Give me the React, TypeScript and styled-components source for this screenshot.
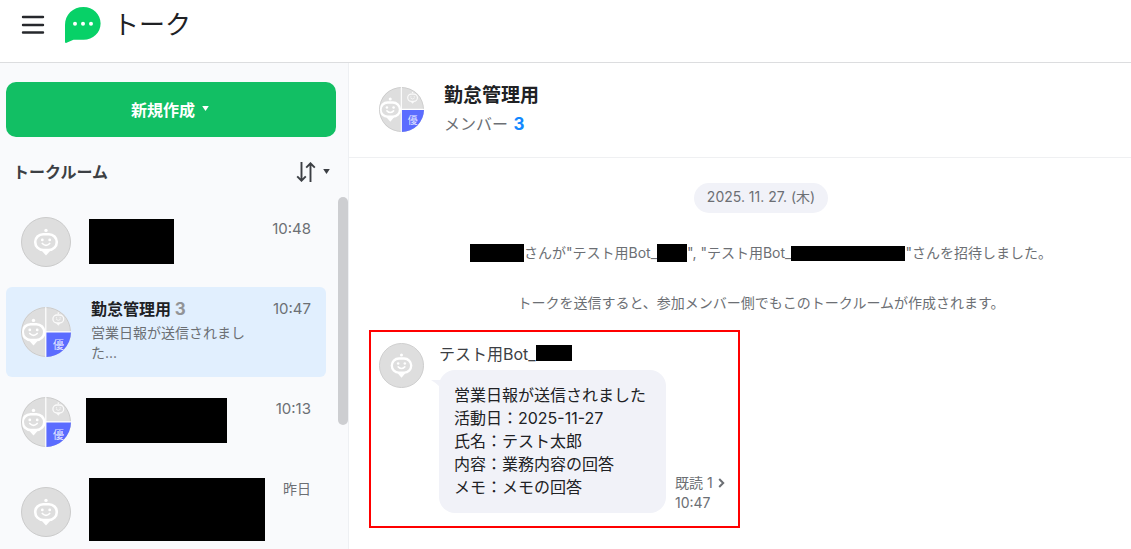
import React, { useId } from "react";
import styled, { createGlobalStyle } from "styled-components";

const GlobalStyle = createGlobalStyle`
  *, *::before, *::after { box-sizing: border-box; }
  body {
    margin: 0;
    background: #fff;
    color: #202124;
    font-family: Inter, "Noto Sans CJK JP", sans-serif;
    font-size: 16px;
  }
  h1, h2, h3, p, ul, time { margin: 0; padding: 0; }
  button { font: inherit; color: inherit; border: 0; background: none; padding: 0; cursor: pointer; }
  svg { display: block; flex: none; }
`;

const Page = styled.div`
  display: flex;
  flex-direction: column;
  height: 100vh;
  overflow: hidden;
`;

const TopBar = styled.header`
  display: flex;
  align-items: center;
  flex: none;
  height: 63px;
  padding: 0 21px 12px;
  border-bottom: 1px solid #dcdddf;
`;

const MenuButton = styled.button`
  margin-right: 20px;
`;

const AppTitle = styled.h1`
  margin-left: 12px;
  font-size: 26px;
  font-weight: 400;
  line-height: 36px;
`;

const Body = styled.div`
  display: flex;
  flex: 1;
  min-height: 0;
`;

const Sidebar = styled.aside`
  display: flex;
  flex-direction: column;
  flex: none;
  width: 349px;
  padding: 19px 0 0 6px;
  overflow: hidden;
  background: #f9fafc;
  border-right: 1px solid #eef0f3;
`;

const CreateButton = styled.button`
  display: flex;
  align-items: center;
  justify-content: center;
  gap: 7px;
  flex: none;
  height: 55px;
  margin-right: 12px;
  padding: 0 2px 2px 0;
  border-radius: 10px;
  background: #12bf64;
  color: #fff;
  font-weight: 700;
`;

const ListHeading = styled.div`
  display: flex;
  align-items: center;
  justify-content: space-between;
  flex: none;
  height: 60px;
  padding: 9px 18px 0 7px;
`;

const ListTitle = styled.h2`
  font-size: 16px;
  font-weight: 700;
  line-height: 24px;
  color: #3c3f44;
`;

const SortButton = styled.button`
  display: flex;
  align-items: center;
  gap: 7px;
  color: #3c3f44;
`;

const ListArea = styled.div`
  display: flex;
  justify-content: space-between;
`;

const RoomList = styled.ul`
  flex: 1;
  margin-right: 12px;
  list-style: none;
`;

const Room = styled.li<{ $active?: boolean }>`
  display: flex;
  align-items: flex-start;
  height: 90px;
  padding: 0 15px;
  border-radius: 6px;
  background: ${(p) => (p.$active ? "#e1effe" : "transparent")};
`;

const RoomAvatar = styled.div`
  padding-top: 20px;
  margin-right: 20px;
`;

const RoomText = styled.div`
  flex: 1;
  padding-top: 10px;
`;

const RoomName = styled.h3`
  font-size: 16px;
  font-weight: 700;
  line-height: 24px;
`;

const RoomCount = styled.span`
  font-size: 17px;
  color: #929497;
`;

const RoomPreview = styled.p`
  width: 156px;
  padding-top: 2px;
  font-size: 14px;
  line-height: 20px;
  color: #6c6f74;
`;

const RoomTime = styled.time<{ $twoLine?: boolean; $day?: boolean }>`
  padding-top: ${(p) => (p.$twoLine ? 12 : 22)}px;
  font-size: ${(p) => (p.$day ? 14 : 15)}px;
  line-height: 20px;
  color: #6c6f74;
`;

const RoomMask = styled.div<{ $width: number; $height: number; $top: number; $shift: number }>`
  width: ${(p) => p.$width}px;
  height: ${(p) => p.$height}px;
  margin: ${(p) => p.$top}px auto 0 -${(p) => p.$shift}px;
  background: #000;
`;

const Thumb = styled.div`
  width: 10px;
  height: 228px;
  border-radius: 5px;
  background: #cdced1;
`;

const Main = styled.main`
  flex: 1;
  min-width: 0;
`;

const RoomHeader = styled.header`
  display: flex;
  align-items: center;
  gap: 20px;
  height: 95px;
  padding: 0 30px 1px;
  border-bottom: 1px solid #eff0f2;
`;

const HeaderName = styled.h2`
  padding-top: 1px;
  font-size: 19px;
  font-weight: 700;
  line-height: 28px;
`;

const Members = styled.p`
  line-height: 28px;
  color: #6c6f74;
`;

const MemberCount = styled.strong`
  margin-left: 1px;
  font-size: 17px;
  color: #1288ff;
`;

const Notices = styled.div`
  display: flex;
  flex-direction: column;
  align-items: center;
  padding: 25px 0 0 42px;
  font-size: 14px;
  line-height: 20px;
  color: #6c6f74;
`;

const DatePill = styled.time`
  padding: 4px 13px 6px;
  border-radius: 15px;
  background: #f1f2f8;
`;

const Notice = styled.p`
  display: flex;
  align-items: center;
  margin-top: 30px;
  white-space: pre;
`;

const TextMask = styled.span<{ $width: number; $height: number }>`
  width: ${(p) => p.$width}px;
  height: ${(p) => p.$height}px;
  background: #000;
`;

const Highlight = styled.section`
  display: flex;
  width: fit-content;
  margin: 17px 0 0 20px;
  padding: 11px 13px 13px 8px;
  border: 2px solid #f00;
`;

const MessageColumn = styled.div`
  margin-left: 15px;
`;

const Sender = styled.h3`
  display: flex;
  align-items: center;
  height: 20px;
  margin-bottom: 7px;
  font-size: 16px;
  font-weight: 400;
  color: #3c3f44;
`;

const Bubble = styled.div`
  position: relative;
  padding: 14px 20px 14px 15px;
  border-radius: 16px;
  background: #f1f2f8;
  line-height: 23px;
`;

const Tail = styled.svg`
  position: absolute;
  top: 10px;
  left: -8px;
`;

const Meta = styled.div`
  align-self: flex-end;
  margin-left: 9px;
  font-size: 14px;
  line-height: 20px;
  color: #6c6f74;
`;

const ReadButton = styled.button`
  display: flex;
  align-items: center;
  gap: 5px;
`;

const MessageTime = styled.time`
  display: block;
`;

const Caret = () => (
  <svg width="7" height="5" viewBox="0 0 7 5" aria-hidden="true">
    <path d="M.2 0h6.600L3.500 5z" fill="currentColor" />
  </svg>
);

const BotFace = () => (
  <g>
    <circle cx="25" cy="13.400" r="1.700" fill="#fff" />
    <rect x="14.200" y="17.200" width="21.600" height="15.800" rx="7.900" fill="none" stroke="#fff" strokeWidth="2.600" />
    <path d="M20.500 33.400h9L25 38.500z" fill="#fff" />
    <circle cx="21.300" cy="22.900" r="1.400" fill="#fff" />
    <circle cx="28.700" cy="22.900" r="1.400" fill="#fff" />
    <path d="M21.300 26.500q3.700 3.600 7.400 0" fill="none" stroke="#fff" strokeWidth="1.700" strokeLinecap="round" />
  </g>
);

const BotAvatar = ({ size }: { size: number }) => (
  <svg width={size} height={size} viewBox="0 0 50 50" aria-hidden="true">
    <circle cx="25" cy="25" r="24.500" fill="#dedede" stroke="#cbcbcb" />
    <BotFace />
  </svg>
);

const GroupAvatar = ({ size }: { size: number }) => {
  const clip = useId();
  return (
    <svg width={size} height={size} viewBox="0 0 50 50" aria-hidden="true">
      <clipPath id={clip}>
        <circle cx="25" cy="25" r="25" />
      </clipPath>
      <g clipPath={`url(#${clip})`}>
        <path d="M0 0h50v50H0z" fill="#dedede" />
        <g transform="translate(-12.500 0)">
          <BotFace />
        </g>
        <g transform="translate(24.800 -.6) scale(.5)" opacity=".85">
          <BotFace />
        </g>
        <circle cx="25" cy="25" r="24.500" fill="none" stroke="#cbcbcb" />
        <path d="M25 25h25v25H25z" fill="#5b6cff" />
        <path d="M24.800 0v50M25 24.900h25" stroke="#fff" strokeWidth="1.200" fill="none" />
        <text x="32" y="41.500" fontSize="11" fill="#fff" fillOpacity=".85">優</text>
      </g>
    </svg>
  );
};

type Mask = { width: number; height: number; top: number; shift: number };
type RoomData = { id: number; group: boolean; time: string; day?: boolean; twoLine?: boolean; mask?: Mask };

const rooms: RoomData[] = [
  { id: 1, group: false, time: "10:48", mask: { width: 85, height: 45, top: 12, shift: 2 } },
  { id: 2, group: true, time: "10:47", twoLine: true },
  { id: 3, group: true, time: "10:13", mask: { width: 141, height: 45, top: 11, shift: 5 } },
  { id: 4, group: false, time: "昨日", day: true, twoLine: true, mask: { width: 176, height: 63, top: 1, shift: 2 } },
];

const messageLines = [
  "営業日報が送信されました",
  "活動日：2025-11-27",
  "氏名：テスト太郎",
  "内容：業務内容の回答",
  "メモ：メモの回答",
];

export default function App() {
  return (
    <Page lang="ja">
      <GlobalStyle />
      <TopBar>
        <MenuButton aria-label="メニュー">
          <svg width="24" height="20" viewBox="0 0 24 20">
            <path d="M2 2h20M2 10h20M2 17.500h20" stroke="#26282c" strokeWidth="2.400" strokeLinecap="round" />
          </svg>
        </MenuButton>
        <svg width="36" height="36" viewBox="0 0 36 36" aria-hidden="true">
          <path
            d="M18.500 0C28 0 35.600 7.200 35.600 16.400S28 32.700 18.500 32.700H8.500L1 36Q0 36 0 34.800V18C0 7.500 8 0 18.500 0z"
            fill="#07d167"
          />
          <circle cx="10" cy="16.700" r="2" fill="#fff" />
          <circle cx="18" cy="16.700" r="2" fill="#fff" />
          <circle cx="26" cy="16.700" r="2" fill="#fff" />
        </svg>
        <AppTitle>トーク</AppTitle>
      </TopBar>
      <Body>
        <Sidebar>
          <CreateButton>
            新規作成
            <Caret />
          </CreateButton>
          <ListHeading>
            <ListTitle>トークルーム</ListTitle>
            <SortButton aria-label="並べ替え">
              <svg width="20" height="20" viewBox="0 0 20 20" fill="none" stroke="currentColor" strokeWidth="1.900">
                <path d="M5.500 0v19M1.200 14.400l4.300 4.300 4.300-4.300M14.500 20V1M10.200 5.600l4.300-4.300 4.300 4.300" />
              </svg>
              <Caret />
            </SortButton>
          </ListHeading>
          <ListArea>
            <RoomList>
              {rooms.map((room) => (
                <Room key={room.id} $active={!room.mask}>
                  <RoomAvatar>{room.group ? <GroupAvatar size={50} /> : <BotAvatar size={50} />}</RoomAvatar>
                  <RoomText>
                    {room.mask ? (
                      <RoomMask
                        $width={room.mask.width}
                        $height={room.mask.height}
                        $top={room.mask.top}
                        $shift={room.mask.shift}
                      />
                    ) : (
                      <>
                        <RoomName>
                          勤怠管理用 <RoomCount>3</RoomCount>
                        </RoomName>
                        <RoomPreview>営業日報が送信されました...</RoomPreview>
                      </>
                    )}
                  </RoomText>
                  <RoomTime $twoLine={room.twoLine} $day={room.day}>
                    {room.time}
                  </RoomTime>
                </Room>
              ))}
            </RoomList>
            <Thumb />
          </ListArea>
        </Sidebar>
        <Main>
          <RoomHeader>
            <GroupAvatar size={45} />
            <div>
              <HeaderName>勤怠管理用</HeaderName>
              <Members>
                メンバー <MemberCount>3</MemberCount>
              </Members>
            </div>
          </RoomHeader>
          <Notices>
            <DatePill dateTime="2025-11-27">2025. 11. 27. (木)</DatePill>
            <Notice>
              <TextMask $width={54} $height={18} />
              さんが"テスト用Bot_
              <TextMask $width={30} $height={18} />
              {'", "テスト用Bot_'}
              <TextMask $width={114} $height={15} />
              "さんを招待しました。
            </Notice>
            <Notice>トークを送信すると、参加メンバー側でもこのトークルームが作成されます。</Notice>
          </Notices>
          <Highlight>
            <BotAvatar size={45} />
            <MessageColumn>
              <Sender>
                テスト用Bot_
                <TextMask $width={36} $height={16} />
              </Sender>
              <Bubble>
                <Tail width="16" height="16" viewBox="0 0 16 16" aria-hidden="true">
                  <path d="M0 0h16v16Q9 5 0 0z" fill="#f1f2f8" />
                </Tail>
                {messageLines.map((line) => (
                  <p key={line}>{line}</p>
                ))}
              </Bubble>
            </MessageColumn>
            <Meta>
              <ReadButton>
                既読 1
                <svg width="7" height="10" viewBox="0 0 7 10" fill="none" stroke="currentColor" strokeWidth="2">
                  <path d="M1.200 1l4 4-4 4" />
                </svg>
              </ReadButton>
              <MessageTime>10:47</MessageTime>
            </Meta>
          </Highlight>
        </Main>
      </Body>
    </Page>
  );
}
